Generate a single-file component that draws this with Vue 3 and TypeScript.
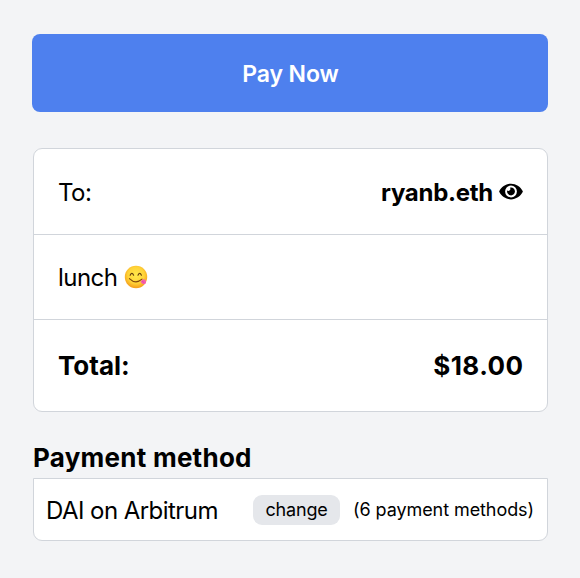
<script setup lang="ts">
const recipient = 'ryanb.eth'
const memo = 'lunch'
const total = '$18.00'
const method = { name: 'DAI on Arbitrum', count: 6 }
</script>

<template>
  <main class="checkout">
    <button class="pay" type="button"><span class="pay-label">Pay Now</span></button>

    <section class="card">
      <div class="row to">
        <span class="label">To:</span>
        <span class="recipient">
          <span class="name">{{ recipient }}</span>
          <svg class="eye" viewBox="0 0 576 512" aria-hidden="true">
            <path d="M572.52 241.4C518.29 135.59 410.93 64 288 64S57.68 135.64 3.48 241.41a32.35 32.35 0 0 0 0 29.19C57.71 376.41 165.07 448 288 448s230.32-71.64 284.52-177.41a32.35 32.35 0 0 0 0-29.19zM288 400a144 144 0 1 1 144-144 143.93 143.93 0 0 1-144 144zm0-240a95.31 95.31 0 0 0-25.31 3.79 47.85 47.85 0 0 1-66.9 66.9A95.78 95.78 0 1 0 288 160z" />
          </svg>
        </span>
      </div>
      <div class="row memo">
        <span class="memo-text">{{ memo }}</span>
        <svg class="emoji" viewBox="0 0 24 24" aria-hidden="true">
          <defs>
            <radialGradient id="face" cx="50%" cy="42%" r="56%">
              <stop offset="0" stop-color="#ffe84a" />
              <stop offset="0.65" stop-color="#ffd338" />
              <stop offset="1" stop-color="#f5a11c" />
            </radialGradient>
          </defs>
          <circle cx="12" cy="12" r="11.2" fill="url(#face)" />
          <path d="M6.2 10.2Q7.9 6.6 9.6 10.2M14 10.2Q15.7 6.6 17.4 10.2" fill="none" stroke="#68400f" stroke-width="1.2" stroke-linecap="round" />
          <path d="M5.4 13.6Q11.6 19.8 18 14.2" fill="none" stroke="#81470b" stroke-width="1.1" stroke-linecap="round" />
          <path d="M16.4 16.2Q17.8 15.6 18.8 14.2C20.8 13.8 22.6 15.6 22 17.6C21.3 20 17.8 19.8 16.4 16.2Z" fill="#f55fae" />
          <path d="M18 16L20.2 17.6" stroke="#d94090" stroke-width=".6" />
        </svg>
      </div>
      <div class="row total">
        <span class="total-label">Total:</span>
        <span class="amount">{{ total }}</span>
      </div>
    </section>

    <h2 class="heading"><span>Payment method</span></h2>
    <section class="method">
      <span class="method-name">{{ method.name }}</span>
      <button class="change" type="button"><span>change</span></button>
      <span class="count">({{ method.count }} payment methods)</span>
    </section>
  </main>
</template>

<style>
body {
  margin: 0;
  background: #f3f4f6;
}
</style>

<style scoped>
.checkout {
  box-sizing: border-box;
  height: 578px;
  padding: 34px 32px 0 33px;
  overflow: hidden;
  background: #f3f4f6;
  color: #000;
  font-family: Inter, "Liberation Sans", sans-serif;
  font-size: 24px;
  white-space: nowrap;
}
button {
  padding: 0;
  border: 0;
  font-family: inherit;
  color: inherit;
}
.pay {
  box-sizing: border-box;
  display: flex;
  align-items: center;
  justify-content: center;
  width: 516px;
  height: 78px;
  margin-left: -0.6px;
  padding-top: 2px;
  border-radius: 8px;
  background: #4e80ee;
  color: #fff;
  font-size: 23px;
  font-weight: 600;
  letter-spacing: -0.1px;
}
.card {
  box-sizing: border-box;
  height: 264px;
  margin-top: 36px;
  border: 1px solid #d1d5db;
  border-radius: 9px;
  background: #fff;
}
.row {
  box-sizing: border-box;
  display: flex;
  align-items: center;
  justify-content: space-between;
  height: 86px;
  padding: 0 24px;
  border-bottom: 1px solid #d1d5db;
}
.row.to {
  padding-top: 1px;
}
.label,
.memo-text {
  letter-spacing: -0.55px;
}
.row.memo {
  height: 85px;
  justify-content: flex-start;
  gap: 7px;
}
.row.total {
  height: 91px;
  border-bottom: 0;
  font-size: 26px;
  font-weight: 700;
}
.amount {
  margin-right: -0.5px;
  letter-spacing: 0.45px;
}
.recipient {
  display: flex;
  align-items: center;
  gap: 6px;
  font-weight: 700;
}
.name {
  letter-spacing: -0.28px;
}
.eye {
  width: 24px;
  height: 21px;
  margin-top: -1px;
}
.emoji {
  width: 24px;
  height: 24px;
}
.heading {
  height: 66px;
  margin: 0;
  padding-top: 28px;
  box-sizing: border-box;
  font-size: 26px;
  line-height: 36px;
  font-weight: 700;
  letter-spacing: 0.25px;
}
.method {
  box-sizing: border-box;
  display: flex;
  align-items: center;
  height: 63px;
  padding: 0 13px 0 12px;
  border: 1px solid #d1d5db;
  border-radius: 0 0 9px 9px;
  background: #fff;
}
.method-name {
  padding-top: 2px;
  letter-spacing: -0.55px;
}
.change {
  width: 87px;
  height: 30px;
  margin-left: auto;
  margin-right: 13px;
  border-radius: 9px;
  background: #e5e7eb;
  font-size: 18px;
  letter-spacing: -0.2px;
}
.count {
  font-size: 18px;
  letter-spacing: -0.08px;
}
</style>
